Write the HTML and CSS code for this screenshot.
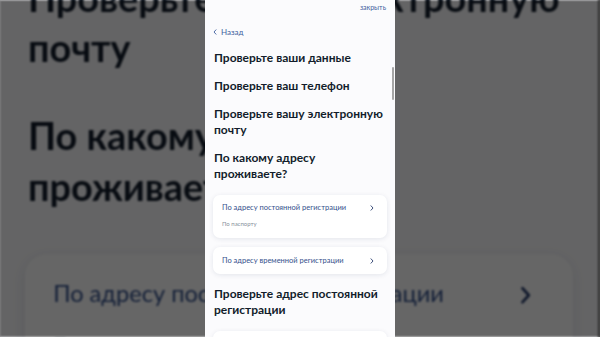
FILE: index.html
```html
<!DOCTYPE html>
<html lang="ru">
<head>
<meta charset="utf-8">
<title>Госуслуги — адрес</title>
<link rel="stylesheet" href="styles.css">
</head>
<body>
<div class="stage">
  <div class="backdrop" aria-hidden="true">
    <div class="screen zoomed">
      <div class="top"><span class="close">закрыть</span></div>
      <div class="back"><svg class="back-icon" viewBox="0 0 4 6" width="4" height="6"><polyline points="3,0.8 1,3 3,5.2" fill="none" stroke="currentColor" stroke-width="0.9" stroke-linecap="round" stroke-linejoin="round"/></svg><span>Назад</span></div>
      <div class="content">
        <div class="title first">Проверьте ваши данные</div>
        <div class="title">Проверьте ваш телефон</div>
        <div class="title">Проверьте вашу электронную почту</div>
        <div class="title">По какому адресу проживаете?</div>
        <div class="card">
          <div class="card-row"><span>По адресу постоянной регистрации</span><svg class="chev" viewBox="0 0 4 6" width="4" height="6"><polyline points="1,0.8 3,3 1,5.2" fill="none" stroke="currentColor" stroke-width="0.9" stroke-linecap="round" stroke-linejoin="round"/></svg></div>
          <div class="card-sub">По паспорту</div>
        </div>
        <div class="card small">
          <div class="card-row"><span>По адресу временной регистрации</span><svg class="chev" viewBox="0 0 4 6" width="4" height="6"><polyline points="1,0.8 3,3 1,5.2" fill="none" stroke="currentColor" stroke-width="0.9" stroke-linecap="round" stroke-linejoin="round"/></svg></div>
        </div>
        <div class="title">Проверьте адрес постоянной регистрации</div>
        <div class="card empty"></div>
      </div>
    </div>
    <div class="shade"></div>
  </div>

  <div class="screen front">
    <div class="top"><span class="close">закрыть</span></div>
    <div class="back"><svg class="back-icon" viewBox="0 0 4 6" width="4" height="6"><polyline points="3,0.8 1,3 3,5.2" fill="none" stroke="currentColor" stroke-width="0.9" stroke-linecap="round" stroke-linejoin="round"/></svg><span>Назад</span></div>
    <div class="content">
      <div class="title first">Проверьте ваши данные</div>
      <div class="title">Проверьте ваш телефон</div>
      <div class="title">Проверьте вашу электронную почту</div>
      <div class="title">По какому адресу проживаете?</div>
      <div class="card">
        <div class="card-row"><span>По адресу постоянной регистрации</span><svg class="chev" viewBox="0 0 4 6" width="4" height="6"><polyline points="1,0.8 3,3 1,5.2" fill="none" stroke="currentColor" stroke-width="0.9" stroke-linecap="round" stroke-linejoin="round"/></svg></div>
        <div class="card-sub">По паспорту</div>
      </div>
      <div class="card small">
        <div class="card-row"><span>По адресу временной регистрации</span><svg class="chev" viewBox="0 0 4 6" width="4" height="6"><polyline points="1,0.8 3,3 1,5.2" fill="none" stroke="currentColor" stroke-width="0.9" stroke-linecap="round" stroke-linejoin="round"/></svg></div>
      </div>
      <div class="title">Проверьте адрес постоянной регистрации</div>
      <div class="card empty"></div>
    </div>
    <div class="scrollbar"></div>
  </div>
</div>
</body>
</html>
```

FILE: styles.css
```css
* { box-sizing: border-box; }

html, body {
  margin: 0;
  padding: 0;
  background: #666;
}

.stage {
  position: relative;
  width: 600px;
  height: 337px;
  overflow: hidden;
  background: #666666;
  display: flex;
  justify-content: center;
  font-family: Lato, "Noto Sans", sans-serif;
}

.backdrop {
  position: absolute;
  inset: 0;
  filter: blur(1.2px);
}

.zoomed {
  position: absolute;
  left: 0;
  top: 0;
  transform-origin: 0 0;
  transform: translate(-0.4px, -360px) scale(3.15);
}

.shade {
  position: absolute;
  inset: 0;
  background: rgba(0, 0, 0, 0.6);
}

.screen {
  width: 190px;
  height: 337px;
  background: #fbfbfd;
  overflow: hidden;
}

.front {
  position: relative;
  z-index: 1;
}

.top {
  display: flex;
  justify-content: flex-end;
  padding: 3px 9px 0 0;
  height: 12px;
}

.close {
  font-size: 7px;
  line-height: 9px;
  color: #3f5f9e;
}

.back {
  display: flex;
  align-items: center;
  gap: 4px;
  margin: 15px 0 0 8px;
  height: 10px;
  font-size: 8px;
  line-height: 10px;
  color: #3f5f9e;
}

.back-icon { display: block; }

.content {
  display: flex;
  flex-direction: column;
  padding: 0 8px;
}

.title {
  margin: 12px 1px 0;
  font-weight: 700;
  font-size: 12px;
  line-height: 16px;
  color: #121d2b;
}

.title.first { margin-top: 13px; }

.card {
  margin-top: 13px;
  background: #ffffff;
  border-radius: 7px;
  box-shadow: 0 1px 5px rgba(20, 40, 80, 0.10);
  padding: 8px 13px 10px 9px;
}

.card.small {
  margin-top: 9px;
  padding-top: 9px;
  padding-bottom: 8px;
}

.card.empty {
  height: 30px;
}

.card-row {
  display: flex;
  justify-content: space-between;
  align-items: center;
  font-size: 7.5px;
  line-height: 10px;
  color: #34508c;
}

.chev {
  display: block;
  color: #2b3f6e;
}

.card-sub {
  margin-top: 7px;
  font-size: 6px;
  line-height: 8px;
  color: #8a929d;
}

.scrollbar {
  position: absolute;
  right: 1px;
  top: 67px;
  width: 2px;
  height: 33px;
  border-radius: 1px;
  background: #a5a5a5;
}
```
